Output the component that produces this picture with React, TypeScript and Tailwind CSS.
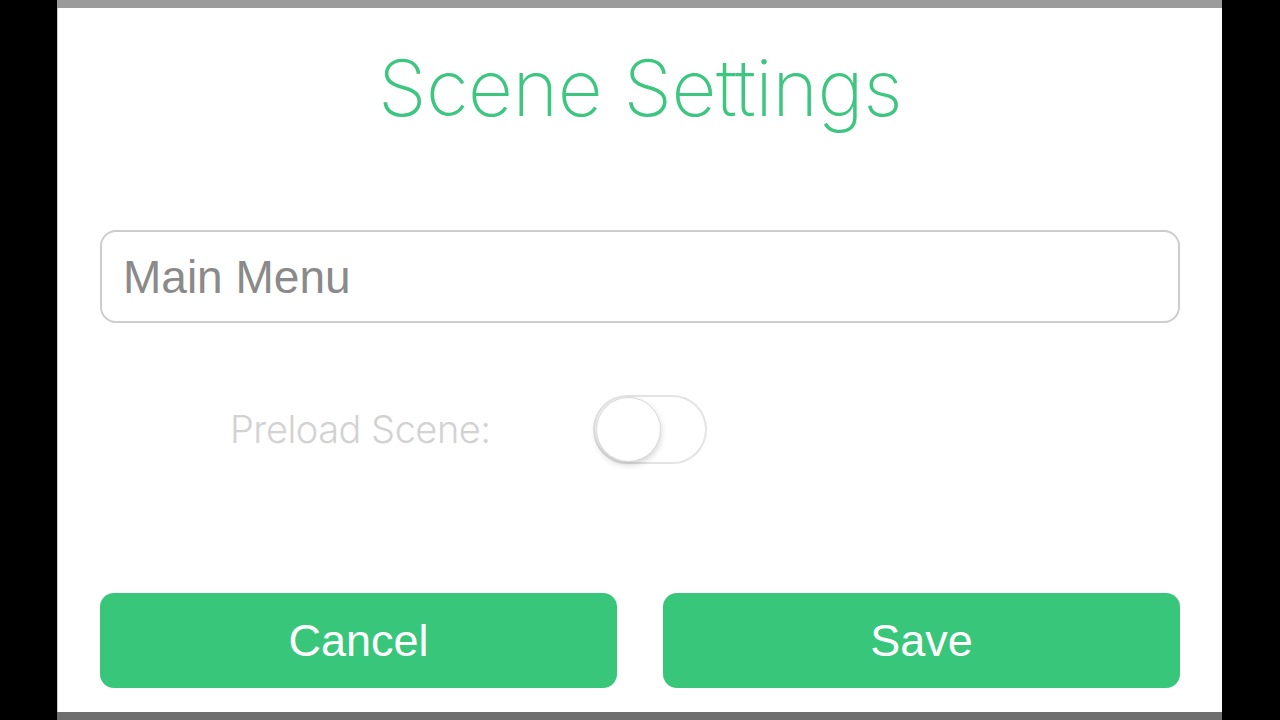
import { useState } from 'react';

export default function App() {
  const [name, setName] = useState('Main Menu');
  const [preload, setPreload] = useState(false);

  return (
    <div className="w-[1280px] h-[720px] bg-black flex pl-[57px] overflow-hidden">
      <div className="w-[1165px] h-full flex flex-col bg-white">
        <div className="h-[8px] bg-[#9b9b9b] shrink-0" />

        <div className="flex-1 flex flex-col px-[42px] border-l border-[#c8c8c8]">
          {/* Title */}
          <div className="h-[160px] flex items-center justify-center">
            <h1 className="text-[#3cc67f] text-[78px] font-extralight font-['Inter',sans-serif] tracking-[-0.5px] leading-none">
              Scene Settings
            </h1>
          </div>

          {/* Scene name */}
          <input
            value={name}
            onChange={(e) => setName(e.target.value)}
            className="mt-[62px] h-[93px] w-full rounded-[16px] border-2 border-[#cdcdcd] px-[21px] text-[46px] text-[#8a8a8a] font-['Liberation_Sans',sans-serif] outline-none"
          />

          {/* Preload toggle */}
          <div className="mt-[72px] flex items-center pl-[130px]">
            <span className="w-[363px] text-[38px] font-light text-[#d2d2d2] font-['Inter',sans-serif] tracking-[-0.5px]">
              Preload Scene:
            </span>
            <button
              onClick={() => setPreload(!preload)}
              className={`w-[114px] h-[69px] rounded-full border-2 flex items-center p-[1px] ${
                preload ? 'bg-[#3cc67f] border-[#3cc67f] justify-end' : 'bg-white border-[#e4e4e4] justify-start'
              }`}
            >
              <span className="w-[65px] h-[65px] rounded-full bg-white border border-[#d8d8d8] shadow-[0_3px_6px_rgba(0,0,0,0.18)]" />
            </button>
          </div>

          {/* Actions */}
          <div className="mt-[129px] flex gap-[46px]">
            <button className="flex-1 h-[95px] rounded-[14px] bg-[#38c77a] text-white text-[45px] font-['Liberation_Sans',sans-serif]">
              Cancel
            </button>
            <button className="flex-1 h-[95px] rounded-[14px] bg-[#38c77a] text-white text-[45px] font-['Liberation_Sans',sans-serif]">
              Save
            </button>
          </div>
        </div>

        <div className="h-[8px] bg-[#6e6e6e] shrink-0" />
      </div>
    </div>
  );
}
